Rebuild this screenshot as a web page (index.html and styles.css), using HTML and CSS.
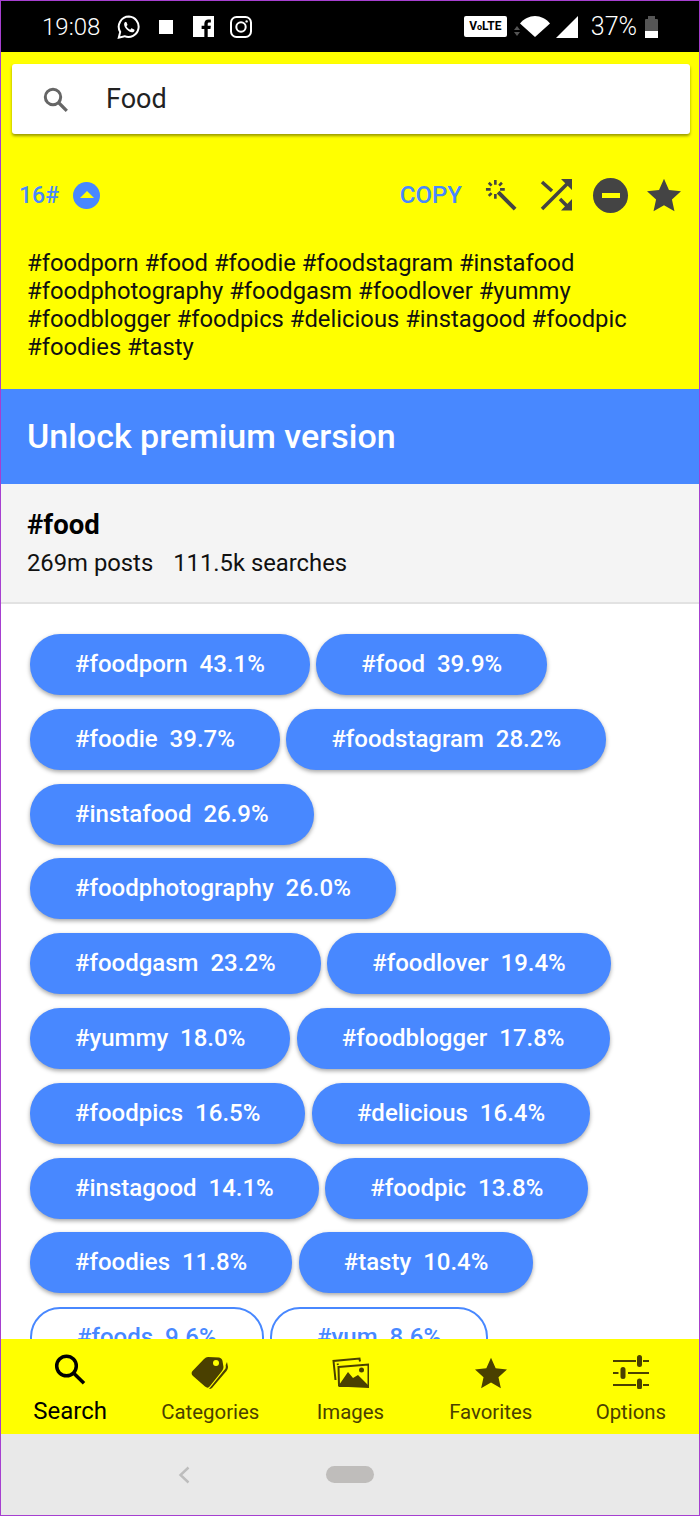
FILE: index.html
```html
<!DOCTYPE html>
<html lang="en">
<head>
    <meta charset="UTF-8">
    <meta name="viewport" content="width=device-width, initial-scale=1.0">
    <title>Hashtags</title>
    <link rel="stylesheet" href="styles.css">
</head>
<body>
<div class="screen">
    <div class="status">
        <div class="status-left">
            <span class="clock">19:08</span>
            <svg class="st-wa" viewBox="0 0 24 24"><path d="M12 1.600a10.200 10.200 0 0 0-8.800 15.400L1.800 22.600l5.700-1.400A10.200 10.200 0 1 0 12 1.600z" fill="none" stroke="#fff" stroke-width="2"/><path d="M8.600 6.800c-.5 0-1.500.9-1.500 2.500 0 3.300 4.500 7.900 7.900 7.900 1.600 0 2.500-1 2.500-1.800 0-.6-.1-.9-.4-1l-2-1c-.4-.2-.7-.1-.9.2l-.7.9c-.2.2-.4.2-.7.1-1.300-.6-2.500-1.700-3.200-3-.1-.3-.1-.5.1-.7l.6-.7c.2-.3.2-.5.1-.8l-.8-1.900c-.2-.4-.4-.5-1-.5z" fill="#fff"/></svg>
            <span class="st-square"></span>
            <svg class="st-fb" viewBox="0 0 20 20"><path fill="#fff" d="M0 0h20v20h-6v-7.600h2.600l.4-3h-3V7.600c0-.9.3-1.400 1.500-1.400H17V3.500c-.3 0-1.200-.1-2.300-.1-2.300 0-3.900 1.400-3.900 4v2H8.200v3h2.600V20H0z"/></svg>
            <svg class="st-ig" viewBox="0 0 22 22" fill="none" stroke="#fff" stroke-width="2"><rect x="1" y="1" width="20" height="20" rx="5.500"/><circle cx="11" cy="11" r="4.700"/><circle cx="16.600" cy="5.400" r="1.200" fill="#fff" stroke="none"/></svg>
        </div>
        <div class="status-right">
            <span class="volte">V<span class="volte-o">o</span>LTE</span>
            <svg class="st-arrows" viewBox="0 0 6 10"><path fill="#555" d="M3 0l3 4H0zM3 10L0 6h6z"/></svg>
            <svg class="st-wifi" viewBox="0 0 30 21"><path fill="#fff" d="M15 21L0 7.500C4 2.800 9.300 0 15 0s11 2.800 15 7.500z"/></svg>
            <svg class="st-signal" viewBox="0 0 22 22"><path fill="#fff" d="M22 0v22H0z"/></svg>
            <span class="battery-pct">37%</span>
            <span class="battery"><span class="battery-level"></span></span>
        </div>
    </div>

    <div class="top">
        <div class="search-card">
            <svg class="search-icon" viewBox="0 0 25 25" fill="none" stroke="#666"><circle cx="10" cy="10" r="7.700" stroke-width="3"/><path stroke-width="3.200" d="M15.500 15.500l8.300 8.300"/></svg>
            <span class="search-text">Food</span>
        </div>
        <div class="toolbar">
            <span class="count">16#</span>
            <span class="count-toggle"><span class="caret"></span></span>
            <span class="copy">COPY</span>
            <svg class="tool-wand" viewBox="0 0 34 34" fill="none" stroke="#444"><path stroke-width="4.200" d="M14 14l18 18"/><path stroke-width="2.800" d="M11 1v5M11 16v5M1 11h5M16 11h5M4 4l3 3M18 4l-3 3M4 18l3-3"/></svg>
            <svg class="tool-shuffle" viewBox="0 0 33 33" fill="none" stroke="#444" stroke-width="3.500"><path d="M2 30L28 4M2 3l10 9M20 20l8 8"/><path fill="#444" stroke="none" d="M21 0h11v11zM32 20v11.500H21z"/></svg>
            <span class="tool-minus"><span class="minus-bar"></span></span>
            <svg class="tool-star" viewBox="0 0 24 24"><path fill="#444" d="M12 .6l3.500 7.900 8.500.9-6.400 5.700 1.800 8.400L12 19.200l-7.400 4.300 1.800-8.400L0 9.400l8.500-.9z"/></svg>
        </div>
        <p class="tags-text">#foodporn #food #foodie #foodstagram #instafood #foodphotography #foodgasm #foodlover #yummy #foodblogger #foodpics #delicious #instagood #foodpic #foodies #tasty</p>
    </div>

    <div class="premium">Unlock premium version</div>

    <div class="info">
        <div class="info-title">#food</div>
        <div class="info-stats"><span>269m posts</span><span>111.5k searches</span></div>
    </div>

    <div class="chips">
        <span class="chip">#foodporn  43.1%</span>
        <span class="chip">#food  39.9%</span>
        <span class="chip">#foodie  39.7%</span>
        <span class="chip">#foodstagram  28.2%</span>
        <span class="chip">#instafood  26.9%</span>
        <span class="chip">#foodphotography  26.0%</span>
        <span class="chip">#foodgasm  23.2%</span>
        <span class="chip">#foodlover  19.4%</span>
        <span class="chip">#yummy  18.0%</span>
        <span class="chip">#foodblogger  17.8%</span>
        <span class="chip">#foodpics  16.5%</span>
        <span class="chip">#delicious  16.4%</span>
        <span class="chip">#instagood  14.1%</span>
        <span class="chip">#foodpic  13.8%</span>
        <span class="chip">#foodies  11.8%</span>
        <span class="chip">#tasty  10.4%</span>
        <span class="chip chip-off">#foods  9.6%</span>
        <span class="chip chip-off">#yum  8.6%</span>
    </div>

    <div class="tabs">
        <div class="tab tab-on">
            <svg viewBox="0 0 36 36" fill="none" stroke="#000" stroke-width="3.500"><circle cx="14.500" cy="13" r="9.800"/><path d="M21.500 20L32 30.300"/></svg>
            <span>Search</span>
        </div>
        <div class="tab">
            <svg viewBox="0 0 38 36"><path fill="#4a4000" d="M17 4l11 .5q3 .5 3.500 3.500l1 6q0 2-1.500 4L19 33q-2 3-5 .5L2 23q-2.500-2.500-.5-5L13 6q2-2 4-2z"/><circle cx="25" cy="10" r="3" fill="#ff0"/><path fill="#4a4000" d="M36 9l1 5q0 2-1.500 4L21 35q-1 1-3 1l16.500-20.500q.5-1.500.2-3.500z"/></svg>
            <span>Categories</span>
        </div>
        <div class="tab">
            <svg viewBox="0 0 38 36"><path fill="none" stroke="#4a4000" stroke-width="2" d="M4.500 27L2.500 8l26-2.500.5 3M7 12l-.5-1.500"/><path fill="#ff0" stroke="#4a4000" stroke-width="2" d="M7.500 14l30-2.500V34L8 32.500z"/><path fill="#4a4000" d="M8 32l9-13 5 6 5-3 10 10v2H8z"/><circle cx="30.500" cy="17" r="2.500" fill="#4a4000"/></svg>
            <span>Images</span>
        </div>
        <div class="tab">
            <svg class="tab-star" viewBox="0 0 24 24"><path fill="#4a4000" d="M12 .6l3.500 7.900 8.500.9-6.400 5.700 1.800 8.400L12 19.200l-7.400 4.300 1.800-8.400L0 9.400l8.500-.9z"/></svg>
            <span>Favorites</span>
        </div>
        <div class="tab">
            <svg viewBox="0 0 36 36" fill="none" stroke="#4a4000"><path stroke-width="2" d="M0 8h23M30 8h6M0 20h5.500M15 20h21M0 32h23M30 32h6"/><path stroke-width="5" stroke-linecap="round" d="M26.500 4.500v7M10 16.500v7M26.500 28v6"/></svg>
            <span>Options</span>
        </div>
    </div>

    <div class="navbar">
        <svg class="nav-back" viewBox="0 0 12 18" fill="none" stroke="#bdbdbd" stroke-width="2.400"><path d="M10.500 1.500L2.500 9l8 7.500"/></svg>
        <span class="nav-pill"></span>
    </div>
</div>
</body>
</html>
```

FILE: styles.css
```css
* {
    box-sizing: border-box;
}
html, body {
    margin: 0;
    padding: 0;
}
body {
    font-family: Roboto, "Liberation Sans", sans-serif;
    background: #fff;
}
.screen {
    width: 700px;
    height: 1516px;
    border: 1px solid #a63fd0;
    display: flex;
    flex-direction: column;
    overflow: hidden;
}

/* status bar */
.status {
    height: 51px;
    flex: none;
    background: #000;
    color: #fff;
    display: flex;
    justify-content: space-between;
    align-items: center;
    padding: 0 41px 0 41px;
    font-size: 24px;
}
.status-left, .status-right {
    display: flex;
    align-items: center;
}
.clock {
    width: 75px;
    font-weight: 300;
}
.st-wa {
    width: 24px;
    height: 24px;
}
.st-square {
    width: 14px;
    height: 14px;
    background: #fff;
    margin-left: 18px;
}
.st-fb {
    width: 21px;
    height: 21px;
    margin-left: 20px;
}
.st-ig {
    width: 22px;
    height: 22px;
    margin-left: 16px;
}
.volte {
    width: 43px;
    height: 21px;
    background: #fff;
    color: #000;
    font-size: 12px;
    font-weight: 700;
    line-height: 21px;
    text-align: center;
    border-radius: 2px;
}
.volte-o {
    font-size: 9px;
}
.st-arrows {
    width: 6px;
    height: 10px;
    margin: 9px 0 0 7px;
}
.st-wifi {
    width: 30px;
    height: 21px;
}
.st-signal {
    width: 22px;
    height: 22px;
    margin-left: 6px;
}
.battery-pct {
    margin-left: 13px;
    font-size: 25px;
    font-weight: 300;
}
.battery {
    position: relative;
    width: 13px;
    height: 19px;
    margin: 3px 0 0 8px;
    background: #555;
    border-radius: 1px 1px 0 0;
}
.battery::before {
    content: "";
    position: absolute;
    left: 3px;
    top: -3px;
    width: 7px;
    height: 3px;
    background: #555;
}
.battery-level {
    position: absolute;
    left: 0;
    right: 0;
    bottom: 0;
    height: 7px;
    background: #fff;
}

/* yellow header */
.top {
    height: 337px;
    flex: none;
    background: #ff0;
    padding: 12px 9px 0 11px;
}
.search-card {
    height: 70px;
    background: #fff;
    border-radius: 3px;
    box-shadow: 0 2px 3px rgba(0, 0, 0, 0.4);
    display: flex;
    align-items: center;
    padding-left: 31px;
}
.search-icon {
    width: 25px;
    height: 25px;
}
.search-text {
    margin-left: 38px;
    font-size: 27px;
    color: #222;
}
.toolbar {
    display: flex;
    align-items: center;
    height: 38px;
    margin-top: 42px;
    padding: 0 9px 0 7px;
}
.count {
    font-size: 23px;
    font-weight: 500;
    color: #4888ff;
}
.count-toggle {
    width: 27px;
    height: 27px;
    border-radius: 50%;
    background: #4888ff;
    margin-left: 14px;
    display: flex;
    align-items: center;
    justify-content: center;
}
.caret {
    border-left: 7px solid transparent;
    border-right: 7px solid transparent;
    border-bottom: 7px solid #ff0;
    margin-top: -2px;
}
.copy {
    margin-left: auto;
    font-size: 24px;
    font-weight: 500;
    color: #4888ff;
}
.tool-wand {
    width: 32px;
    height: 32px;
    margin-left: 23px;
}
.tool-shuffle {
    width: 33px;
    height: 33px;
    margin-left: 23px;
}
.tool-minus {
    width: 35px;
    height: 35px;
    border-radius: 50%;
    background: #444;
    margin-left: 20px;
    display: flex;
    align-items: center;
    justify-content: center;
}
.minus-bar {
    width: 18px;
    height: 5px;
    background: #ff0;
}
.tool-star {
    width: 34px;
    height: 34px;
    margin-left: 19px;
}
.tags-text {
    margin: 35px 0 0 15px;
    width: 630px;
    font-size: 23.800px;
    line-height: 28px;
    color: #111;
}

/* premium banner and tag info */
.premium {
    height: 95px;
    flex: none;
    background: #4888ff;
    color: #fff;
    font-size: 34px;
    font-weight: 500;
    line-height: 95px;
    padding-left: 26px;
}
.info {
    height: 120px;
    flex: none;
    background: #f4f4f4;
    border-bottom: 2px solid #e2e2e2;
    padding: 25px 0 0 26px;
}
.info-title {
    font-size: 27.500px;
    font-weight: 700;
    line-height: 32px;
    color: #000;
}
.info-stats {
    display: flex;
    gap: 20px;
    margin-top: 6px;
    font-size: 23.800px;
    line-height: 32px;
    color: #111;
}

/* chips */
.chips {
    flex: 1;
    min-height: 0;
    overflow: hidden;
    display: flex;
    flex-wrap: wrap;
    align-content: flex-start;
    gap: 13.800px 6.500px;
    padding: 30px 50px 0 29px;
}
.chip {
    height: 61px;
    padding: 0 45px;
    border-radius: 30px;
    background: #4888ff;
    color: #fff;
    font-size: 24px;
    font-weight: 500;
    line-height: 61px;
    white-space: pre;
    box-shadow: 0 2px 4px rgba(0, 0, 0, 0.35);
}
.chip-off {
    background: #fff;
    color: #4888ff;
    border: 2px solid #4888ff;
    line-height: 57px;
    box-shadow: none;
}

/* bottom tabs */
.tabs {
    height: 95px;
    flex: none;
    margin: 0 -2px 0 -1px;
    background: #ff0;
    display: grid;
    grid-template-columns: repeat(5, 1fr);
}
.tab {
    display: flex;
    flex-direction: column;
    align-items: center;
    padding-top: 14px;
    color: #4a4000;
    font-size: 20.400px;
}
.tab svg {
    height: 36px;
    width: 38px;
}
.tab span {
    margin-top: 10px;
    line-height: 26px;
}
.tab .tab-star {
    width: 32px;
    height: 32px;
    margin-top: 4px;
}
.tab-on {
    color: #000;
    font-size: 24px;
}
.tab-on span {
    margin-top: 8px;
    line-height: 28px;
}

/* android nav */
.navbar {
    height: 81px;
    flex: none;
    background: #e9e9e9;
    display: flex;
    align-items: center;
    padding-left: 177px;
}
.nav-back {
    width: 12px;
    height: 18px;
}
.nav-pill {
    width: 48px;
    height: 17px;
    border-radius: 9px;
    background: #bfbdbb;
    margin-left: 136px;
}
```
